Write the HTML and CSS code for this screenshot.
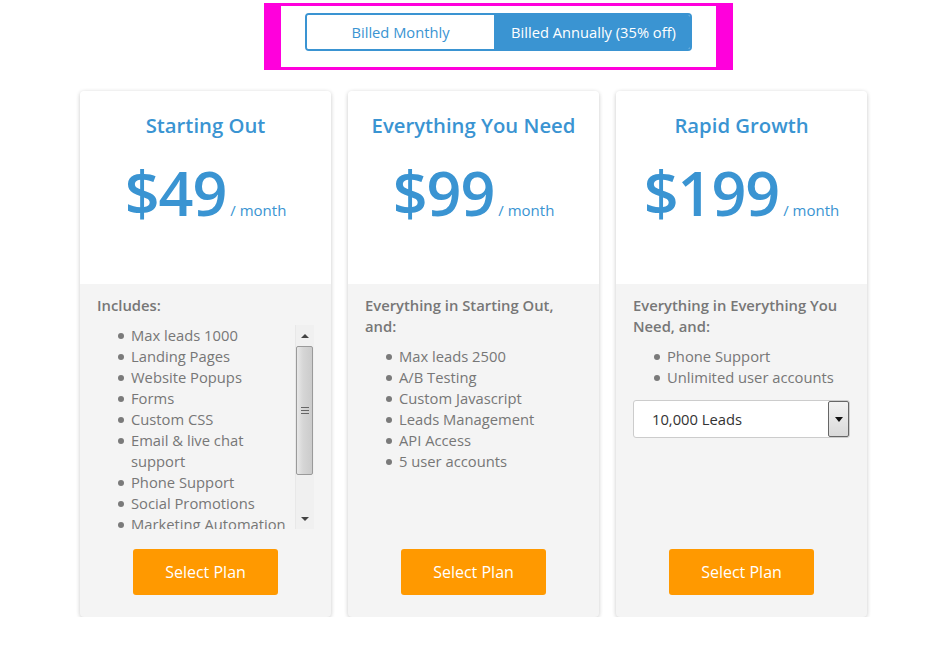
FILE: index.html
```html
<!DOCTYPE html>
<html>
<head>
<meta charset="utf-8">
<link rel="stylesheet" href="styles.css">
</head>
<body>
<div class="page">
  <div class="toggle-frame">
    <div class="toggle">
      <div class="seg seg-off">Billed Monthly</div>
      <div class="seg seg-on">Billed Annually (35% off)</div>
    </div>
  </div>

  <div class="cards">
    <div class="card">
      <div class="card-top">
        <h2 class="plan-title">Starting Out</h2>
        <div class="price"><span class="amount">$49</span><span class="per">/ month</span></div>
      </div>
      <div class="card-body">
        <div class="feat-head">Includes:</div>
        <div class="scroll-box">
          <ul class="feat-list scroll-list">
            <li>Max leads 1000</li>
            <li>Landing Pages</li>
            <li>Website Popups</li>
            <li>Forms</li>
            <li>Custom CSS</li>
            <li>Email &amp; live chat support</li>
            <li>Phone Support</li>
            <li>Social Promotions</li>
            <li class="nowrap">Marketing Automation</li>
          </ul>
          <div class="sbar">
            <div class="sbar-btn"><span class="tri-up"></span></div>
            <div class="sbar-thumb"><span class="grip"></span></div>
            <div class="sbar-track"></div>
            <div class="sbar-btn"><span class="tri-down"></span></div>
          </div>
        </div>
        <button class="select-btn">Select Plan</button>
      </div>
    </div>

    <div class="card">
      <div class="card-top">
        <h2 class="plan-title">Everything You Need</h2>
        <div class="price"><span class="amount">$99</span><span class="per">/ month</span></div>
      </div>
      <div class="card-body">
        <div class="feat-head">Everything in Starting Out, and:</div>
        <ul class="feat-list">
          <li>Max leads 2500</li>
          <li>A/B Testing</li>
          <li>Custom Javascript</li>
          <li>Leads Management</li>
          <li>API Access</li>
          <li>5 user accounts</li>
        </ul>
        <button class="select-btn">Select Plan</button>
      </div>
    </div>

    <div class="card">
      <div class="card-top">
        <h2 class="plan-title">Rapid Growth</h2>
        <div class="price"><span class="amount">$199</span><span class="per">/ month</span></div>
      </div>
      <div class="card-body">
        <div class="feat-head">Everything in Everything You Need, and:</div>
        <ul class="feat-list">
          <li>Phone Support</li>
          <li>Unlimited user accounts</li>
        </ul>
        <div class="dropdown">
          <span class="dd-text">10,000 Leads</span>
          <span class="dd-arrow"><span class="tri-down"></span></span>
        </div>
        <button class="select-btn">Select Plan</button>
      </div>
    </div>
  </div>
</div>
</body>
</html>
```

FILE: styles.css
```css
* { box-sizing: border-box; }
html, body { margin: 0; padding: 0; background: #fff; }
body { font-family: "Open Sans", "Liberation Sans", sans-serif; color: #777; }

.page { padding-top: 3px; }

.toggle-frame {
  margin-left: 264px;
  width: 469px;
  height: 67px;
  border-style: solid;
  border-color: #ff00dc;
  border-width: 3px 17px;
  background: #fff;
  padding: 7px 0 0 24px;
}
.toggle {
  display: flex;
  width: 387px;
  height: 38px;
  border: 2px solid #3a94d2;
  border-radius: 4px;
  overflow: hidden;
}
.seg {
  display: flex;
  align-items: center;
  justify-content: center;
  font-size: 14.7px;
}
.seg-off { width: 187px; color: #3a94d2; background: #fff; }
.seg-on { flex: 1; color: #fff; background: #3a94d2; padding-left: 3px; }

.cards {
  display: flex;
  gap: 17px;
  margin: 21px 0 0 80px;
}
.card {
  width: 251px;
  height: 526px;
  border-radius: 4px;
  box-shadow: 0 1px 4px rgba(0,0,0,0.22);
  display: flex;
  flex-direction: column;
  overflow: hidden;
  background: #f4f4f4;
}
.card-top {
  height: 193px;
  background: #fff;
  display: flex;
  flex-direction: column;
  align-items: center;
  padding-top: 20px;
}
.plan-title {
  margin: 0;
  font-size: 20.3px;
  font-weight: 600;
  color: #3a94d2;
  line-height: 28px;
}
.price {
  margin-top: 16px;
  display: flex;
  align-items: baseline;
  color: #3a94d2;
}
.amount {
  font-size: 61px;
  font-weight: 600;
  line-height: 76px;
  letter-spacing: -1px;
}
.per { font-size: 15px; margin-left: 4px; }

.card-body {
  flex: 1;
  display: flex;
  flex-direction: column;
  padding: 11px 17px 22px 17px;
}
.feat-head {
  font-size: 14.8px;
  font-weight: 600;
  line-height: 21px;
  color: #777;
  margin-bottom: 9px;
}
.feat-list {
  margin: 0;
  padding-left: 34px;
  font-size: 14.75px;
  line-height: 21px;
  list-style: none;
}
.feat-list li { position: relative; }
.feat-list li.nowrap { white-space: nowrap; }
.feat-list li::before {
  content: "";
  position: absolute;
  left: -13px;
  top: 8px;
  width: 6px;
  height: 6px;
  border-radius: 50%;
  background: #7a7a7a;
}

.scroll-box {
  display: flex;
  height: 204px;
  overflow: hidden;
}
.scroll-list { flex: 1; min-width: 0; }

.sbar {
  width: 19px;
  flex-shrink: 0;
  height: 204px;
  display: flex;
  flex-direction: column;
  background: #f0f0f0;
  border-left: 1px solid #e8e8e8;
  position: relative;
  z-index: 1;
}
.sbar-btn {
  height: 21px;
  display: flex;
  align-items: center;
  justify-content: center;
}
.sbar-thumb {
  height: 129px;
  margin: 0 1px 0 0;
  border: 1px solid #9a9a9a;
  border-radius: 2px;
  background: linear-gradient(to right, #e8e8e8, #d6d6d6 40%, #cbcbcb);
  display: flex;
  align-items: center;
  justify-content: center;
}
.grip {
  width: 8px;
  height: 7px;
  border-top: 1px solid #666;
  border-bottom: 1px solid #666;
  position: relative;
}
.grip::after {
  content: "";
  position: absolute;
  left: 0; right: 0; top: 2px;
  border-top: 1px solid #666;
}
.sbar-track { flex: 1; }
.tri-up {
  width: 0; height: 0;
  border-left: 4px solid transparent;
  border-right: 4px solid transparent;
  border-bottom: 4px solid #444;
}
.tri-down {
  width: 0; height: 0;
  border-left: 4px solid transparent;
  border-right: 4px solid transparent;
  border-top: 4px solid #444;
}

.dropdown {
  margin-top: 12px;
  height: 38px;
  border: 1px solid #ccc;
  border-radius: 3px;
  background: #fff;
  display: flex;
  align-items: center;
  justify-content: space-between;
  padding-left: 18px;
}
.dd-text { font-size: 14.75px; color: #333; }
.dd-arrow {
  width: 21px;
  height: 36px;
  border: 1px solid #666;
  border-radius: 2px;
  background: linear-gradient(to bottom, #f2f2f2, #d9d9d9);
  display: flex;
  align-items: center;
  justify-content: center;
}
.dd-arrow .tri-down { border-top-color: #111; border-width: 5px 4px 0 4px; }

.select-btn {
  margin: auto auto 0 auto;
  width: 145px;
  height: 46px;
  border: 0;
  border-radius: 3px;
  background: #ff9900;
  color: #fff;
  font-family: "Open Sans", "Liberation Sans", sans-serif;
  font-size: 16px;
  padding: 0;
}
```
